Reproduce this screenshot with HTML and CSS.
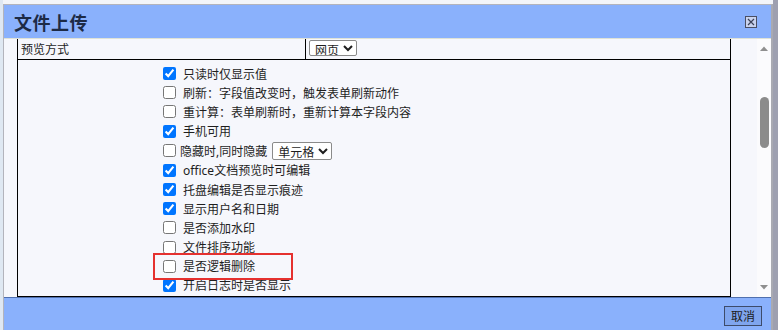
FILE: index.html
```html
<!DOCTYPE html>
<html lang="zh-CN">
<head>
<meta charset="utf-8">
<title>文件上传</title>
<link rel="stylesheet" href="styles.css">
</head>
<body>
<div class="page-left"></div>
<div class="dialog">
  <div class="titlebar">
    <span class="title">文件上传</span>
    <span class="close" title="关闭">
      <svg width="12" height="12" viewBox="0 0 12 12"><rect x="0.5" y="0.5" width="11" height="11" fill="#c9d3ee" stroke="#4a4f63"/><path d="M3 3 L9 9 M9 3 L3 9" stroke="#3c4258" stroke-width="1.2"/></svg>
    </span>
  </div>
  <div class="content">
    <div class="main">
      <table class="props">
        <tr class="row-head">
          <td class="cell-label">预览方式</td>
          <td class="cell-value"><select class="sel"><option>网页</option></select></td>
        </tr>
        <tr>
          <td colspan="2" class="cell-options">
            <div class="options">
              <label class="opt"><input type="checkbox" checked><span>只读时仅显示值</span></label>
              <label class="opt"><input type="checkbox"><span>刷新：字段值改变时，触发表单刷新动作</span></label>
              <label class="opt"><input type="checkbox"><span>重计算：表单刷新时，重新计算本字段内容</span></label>
              <label class="opt"><input type="checkbox" checked><span>手机可用</span></label>
              <div class="opt opt-tight"><input type="checkbox"><span>隐藏时,同时隐藏</span><select class="sel sel-cell"><option>单元格</option></select></div>
              <label class="opt"><input type="checkbox" checked><span>office文档预览时可编辑</span></label>
              <label class="opt"><input type="checkbox" checked><span>托盘编辑是否显示痕迹</span></label>
              <label class="opt"><input type="checkbox" checked><span>显示用户名和日期</span></label>
              <label class="opt"><input type="checkbox"><span>是否添加水印</span></label>
              <label class="opt"><input type="checkbox"><span>文件排序功能</span></label>
              <label class="opt marked"><input type="checkbox"><span>是否逻辑删除</span><i class="mark"></i></label>
              <label class="opt"><input type="checkbox" checked><span>开启日志时是否显示</span></label>
            </div>
          </td>
        </tr>
      </table>
    </div>
    <div class="scrollbar">
      <svg class="arrow" width="14" height="10" viewBox="0 0 14 10"><path d="M3 8 L7 3.5 L11 8 Z" fill="#8f8f8f"/></svg>
      <div class="track"><div class="thumb"></div></div>
      <svg class="arrow" width="14" height="10" viewBox="0 0 14 10"><path d="M3 2 L7 6.5 L11 2 Z" fill="#8f8f8f"/></svg>
    </div>
  </div>
  <div class="footer">
    <button class="btn">取消</button>
  </div>
</div>
<div class="page-right"></div>
</body>
</html>
```

FILE: styles.css
```css
html, body {
  margin: 0;
  padding: 0;
}
body {
  display: flex;
  height: 330px;
  overflow: hidden;
  background: #f3f5f9;
  font-family: "Noto Sans", "Noto Sans CJK SC", sans-serif;
  font-size: 12px;
  color: #1e1e1e;
}
.page-left {
  width: 3px;
  background: #dfe8f2;
}
.dialog {
  width: 767px;
  margin-top: 4px;
  border-top: 1px solid #b3b4bc;
  border-left: 1px solid #b3b4bc;
  border-right: 2px solid #a9aab2;
  display: flex;
  flex-direction: column;
  background: #f6f7fc;
  flex: none;
}
.page-right {
  flex: 1;
  background: #9ea0b0;
}
.titlebar {
  height: 33px;
  background: #8ab1fc;
  display: flex;
  align-items: center;
  justify-content: space-between;
  padding: 0 14px 0 10px;
  border-bottom: 1px solid #dfe2d6;
  flex: none;
}
.title {
  font-size: 18px;
  font-weight: bold;
  color: #1d2b46;
  letter-spacing: 0.5px;
}
.close {
  display: flex;
  margin-top: 1px;
}
.content {
  height: 258px;
  display: flex;
  flex: none;
  overflow: hidden;
}
.main {
  width: 753px;
  padding-left: 13px;
  box-sizing: border-box;
}
.props {
  width: 714px;
  border-collapse: collapse;
  border-left: 1px solid #000;
  border-right: 1px solid #000;
  border-bottom: 1px solid #000;
}
.props td {
  padding: 0;
}
.row-head td {
  height: 20px;
  border-bottom: 1px solid #000;
}
.cell-label {
  width: 284px;
  padding-left: 3px !important;
  border-right: 1px solid #000;
  vertical-align: middle;
}
.cell-value {
  padding-left: 3px !important;
  vertical-align: top;
}
.sel {
  font-family: "Noto Sans", "Noto Sans CJK SC", sans-serif;
  font-size: 12px;
  color: #1e1e1e;
  height: 16px;
  padding: 0 0 0 1px;
  margin: 1px 0 0 0;
  border: 1px solid #8a8a8a;
  border-radius: 2px;
  background: #fff;
  line-height: 14px;
}
.cell-options {
  height: 236px;
  vertical-align: top;
  padding-left: 141px !important;
}
.options {
  display: flex;
  flex-direction: column;
  padding-top: 4px;
}
.opt {
  display: flex;
  align-items: center;
  height: 19.2px;
  white-space: nowrap;
}
.opt input {
  margin: 0 3px 0 4px;
  width: 13px;
  height: 13px;
}
.opt span {
  margin-left: 4px;
}
.opt-tight {
  height: 20px;
}
.opt-tight span {
  margin-left: 1px;
}
.sel-cell {
  margin: 0 0 0 5px;
  height: 18px;
}
.marked {
  position: relative;
}
.mark {
  position: absolute;
  left: -6px;
  top: -4px;
  width: 140px;
  height: 27px;
  border: 2px solid #e5312f;
  box-sizing: border-box;
}
.scrollbar {
  width: 14px;
  background: #fbfbfd;
  display: flex;
  flex-direction: column;
  align-items: center;
  padding-top: 4px;
  box-sizing: border-box;
}
.arrow {
  display: block;
  flex: none;
}
.track {
  flex: 1;
  width: 14px;
  display: flex;
  justify-content: center;
}
.thumb {
  margin-top: 44px;
  width: 9px;
  height: 51px;
  border-radius: 5px;
  background: #8b8b8b;
}
.scrollbar .arrow:last-child {
  margin-bottom: 4px;
}
.footer {
  flex: 1;
  background: #8ab1fc;
  border-top: 1px solid #4f6fae;
  display: flex;
  justify-content: flex-end;
  align-items: flex-start;
  padding: 8px 9px 0 0;
}
.btn {
  font-family: "Noto Sans", "Noto Sans CJK SC", sans-serif;
  font-size: 12px;
  color: #1c1c1c;
  width: 38px;
  height: 20px;
  padding: 0;
  background: #7fa5ee;
  border: 1px solid #3d4b6a;
  border-radius: 0;
}
```
